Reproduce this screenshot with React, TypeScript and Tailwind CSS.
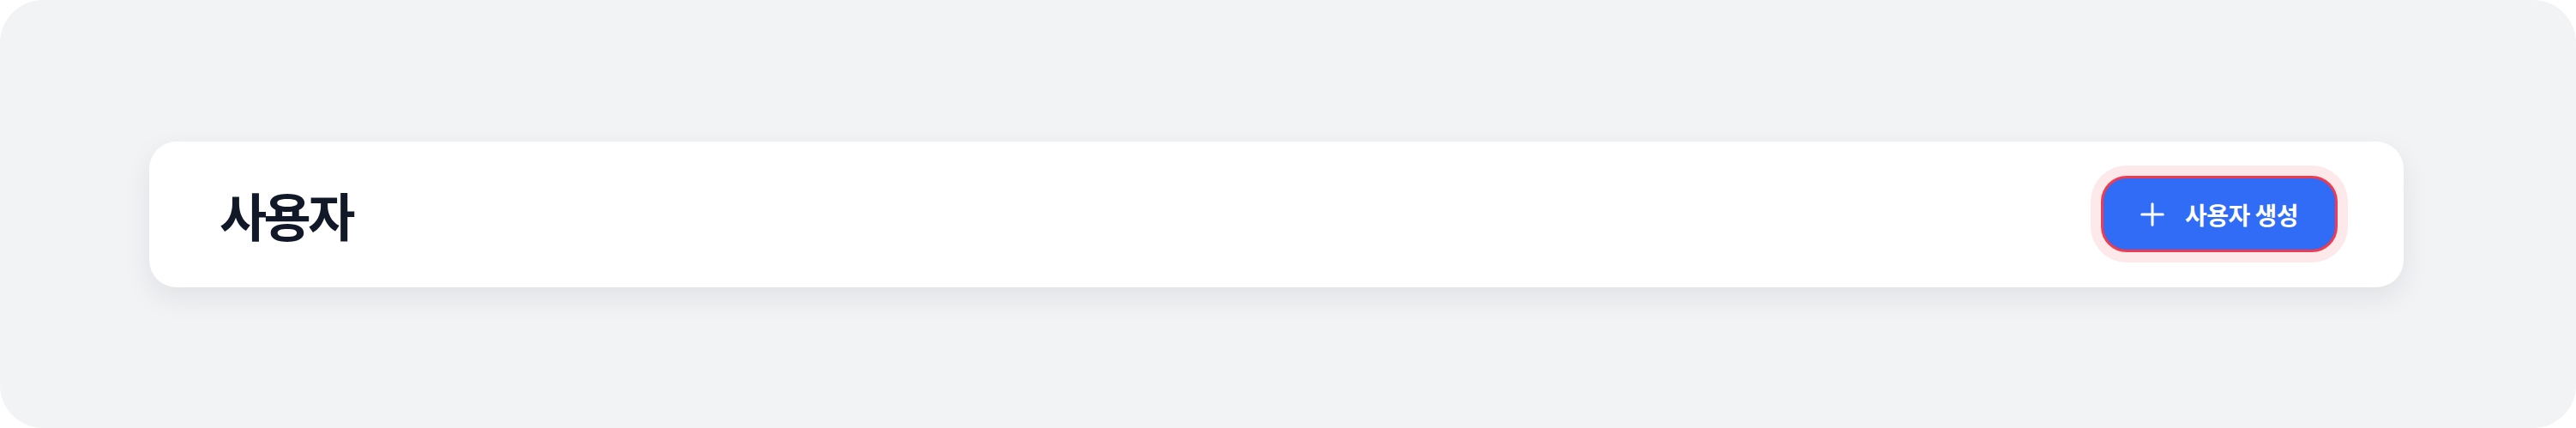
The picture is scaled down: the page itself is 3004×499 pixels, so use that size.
import React from 'react';

const PlusIcon = () => (
  <svg viewBox="0 0 24 24" className="w-[28px] h-[28px]" fill="none" stroke="currentColor" strokeWidth={2.6} strokeLinecap="round">
    <path d="M12 1.5v21M1.5 12h21" />
  </svg>
);

export default function App() {
  return (
    <div className="w-[3004px] h-[499px] bg-white" style={{ fontFamily: '"Noto Sans CJK KR", "Noto Sans", sans-serif' }}>
      <div className="h-full bg-[#f2f3f5] rounded-[50px] flex items-center pl-[174px] pr-[201px]">
        {/* Header card */}
        <div className="flex-1 h-[170px] bg-white rounded-[32px] shadow-[0_12px_32px_rgba(17,24,39,0.08)] flex items-center justify-between pl-[82px] pr-[77px]">
          <h1 className="text-[60px] font-bold text-[#111827] tracking-[-0.06em] leading-none">사용자</h1>
          <button className="flex items-center justify-center gap-[24px] w-[276px] h-[89px] rounded-[30px] bg-[#306cf6] border-[3px] border-[#f03a4e] ring-[12px] ring-[#fde8ea] text-white">
            <PlusIcon />
            <span className="text-[28px] font-bold tracking-[-0.02em] leading-none">사용자 생성</span>
          </button>
        </div>
      </div>
    </div>
  );
}
